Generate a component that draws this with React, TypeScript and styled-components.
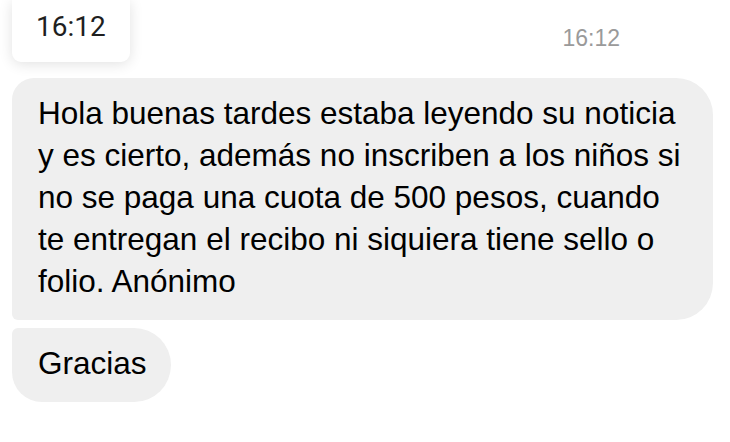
import React from 'react';
import styled, { createGlobalStyle } from 'styled-components';

const GlobalStyle = createGlobalStyle`
  html, body {
    margin: 0;
    padding: 0;
    background: #ffffff;
  }
  body {
    font-family: 'Liberation Sans', Arial, Helvetica, sans-serif;
    -webkit-font-smoothing: antialiased;
  }
`;

type Corner = 'first' | 'last';

const messages: { id: number; text: string; corner: Corner }[] = [
  {
    id: 1,
    text:
      'Hola buenas tardes estaba leyendo su noticia y es cierto, además no inscriben a los niños si no se paga una cuota de 500 pesos, cuando te entregan el recibo ni siquiera tiene sello o folio. Anónimo',
    corner: 'first',
  },
  { id: 2, text: 'Gracias', corner: 'last' },
];

function App() {
  return (
    <>
      <GlobalStyle />
      <Page>
        <Header>
          <DateChip>16:12</DateChip>
          <Stamp>16:12</Stamp>
        </Header>
        <Thread>
          {messages.map((m) => (
            <Bubble key={m.id} $corner={m.corner}>
              {m.text}
            </Bubble>
          ))}
        </Thread>
      </Page>
    </>
  );
}

const Page = styled.div`
  display: flex;
  flex-direction: column;
  padding: 0 12px;
  min-height: 442px;
  box-sizing: border-box;
`;

const Header = styled.div`
  display: flex;
  align-items: flex-start;
  height: 62px;
`;

const DateChip = styled.div`
  height: 62px;
  box-sizing: border-box;
  padding: 10px 24px 0;
  background: #ffffff;
  border-radius: 0 0 9px 9px;
  box-shadow: 0 2px 14px rgba(0, 0, 0, 0.12);
  font-family: Roboto, 'Noto Sans', sans-serif;
  font-size: 28px;
  color: #1f1f1f;
`;

const Stamp = styled.div`
  margin-left: auto;
  margin-right: 98px;
  padding-top: 25px;
  font-size: 23px;
  line-height: 27px;
  color: #9a9a9a;
`;

const Thread = styled.div`
  display: flex;
  flex-direction: column;
  align-items: flex-start;
  gap: 8px;
  margin-top: 16px;
`;

const Bubble = styled.div<{ $corner: Corner }>`
  max-width: 701px;
  box-sizing: border-box;
  padding: 14px 27px 18px 26px;
  background: #efefef;
  color: #000000;
  font-size: 31.5px;
  line-height: 42px;
  border-radius: ${(p) =>
    p.$corner === 'first' ? '22px 37px 37px 6px' : '6px 37px 37px 30px'};
  padding-right: ${(p) => (p.$corner === 'first' ? '27px' : '24px')};
`;

export default App;
